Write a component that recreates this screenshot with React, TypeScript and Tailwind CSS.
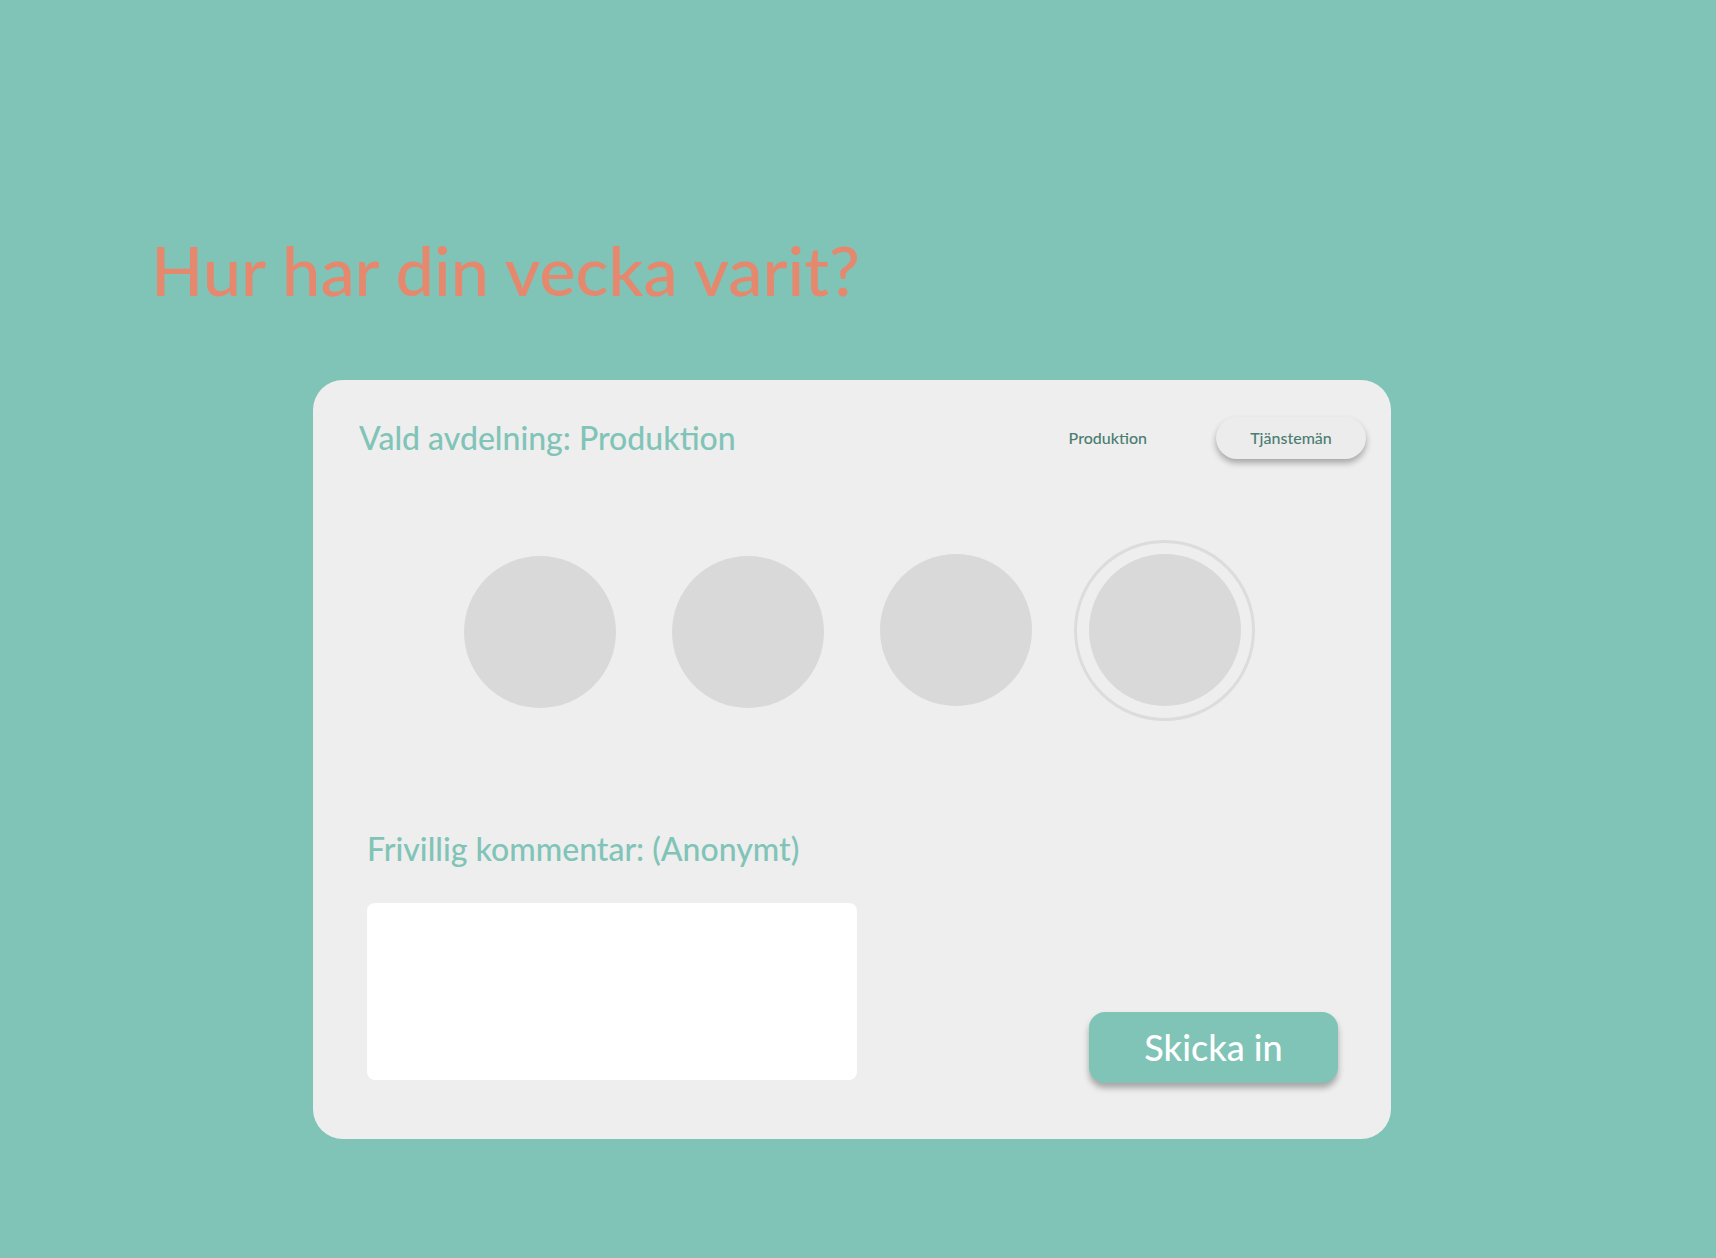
import { useState } from "react";

const MOODS = [0, 1, 2, 3];

export default function App() {
  const [dept, setDept] = useState("Produktion");
  const [mood, setMood] = useState(3);
  const [comment, setComment] = useState("");

  return (
    <div className="min-h-screen w-full bg-[#80c4b7] font-['Lato',sans-serif] overflow-hidden">
      <h1 className="pl-[151px] pt-[236px] text-[68.5px] leading-[1] text-[#e5886e] font-medium">
        Hur har din vecka varit?
      </h1>

      <div className="ml-[313px] mt-[75px] w-[1078px] h-[759px] rounded-[30px] bg-[#eeeeee] flex flex-col">
        {/* Header: selected department + toggle */}
        <div className="flex items-center justify-between pl-[46px] pr-[25px] pt-[37px]">
          <h2 className="text-[32px] leading-[40px] text-[#80c4b7] font-medium">
            Vald avdelning: {dept}
          </h2>
          <div className="flex items-center gap-[69px]">
            <button
              onClick={() => setDept("Produktion")}
              className="text-[16px] text-[#4b7d72] font-medium"
            >
              Produktion
            </button>
            <button
              onClick={() => setDept("Tjänstemän")}
              className="h-[42px] w-[150px] rounded-full bg-[#ececec] text-[16px] text-[#4b7d72] font-medium shadow-[0_4px_6px_rgba(0,0,0,0.3)]"
            >
              Tjänstemän
            </button>
          </div>
        </div>

        {/* Mood circles */}
        <div className="flex items-center justify-start pl-[151px] mt-[83px] gap-[56px] h-[181px]">
          {MOODS.map((m) => (
            <button
              key={m}
              onClick={() => setMood(m)}
              className={
                m === mood
                  ? "w-[181px] h-[181px] -ml-[14px] rounded-full border-[3px] border-[#dcdcdc] flex items-center justify-center -mt-[4px]"
                  : m >= 2
                  ? "w-[152px] h-[152px] rounded-full bg-[#d9d9d9] -mt-[4px]"
                  : "w-[152px] h-[152px] rounded-full bg-[#d9d9d9]"
              }
            >
              {m === mood && <span className="block w-[152px] h-[152px] rounded-full bg-[#d9d9d9]" />}
            </button>
          ))}
        </div>

        {/* Comment */}
        <div className="pl-[54px] mt-[106px]">
          <p className="text-[32px] leading-[40px] text-[#80c4b7] font-medium">Frivillig kommentar: (Anonymt)</p>
        </div>
        <div className="flex items-end justify-between pl-[54px] pr-[53px] mt-[34px]">
          <textarea
            value={comment}
            onChange={(e) => setComment(e.target.value)}
            className="w-[490px] h-[177px] rounded-[8px] bg-white resize-none outline-none p-3"
          />
          <button className="mb-[-3px] w-[249px] h-[71px] rounded-[16px] bg-[#80c4b7] text-white text-[36px] font-medium shadow-[0_5px_6px_rgba(0,0,0,0.3)]">
            Skicka in
          </button>
        </div>
      </div>
    </div>
  );
}
